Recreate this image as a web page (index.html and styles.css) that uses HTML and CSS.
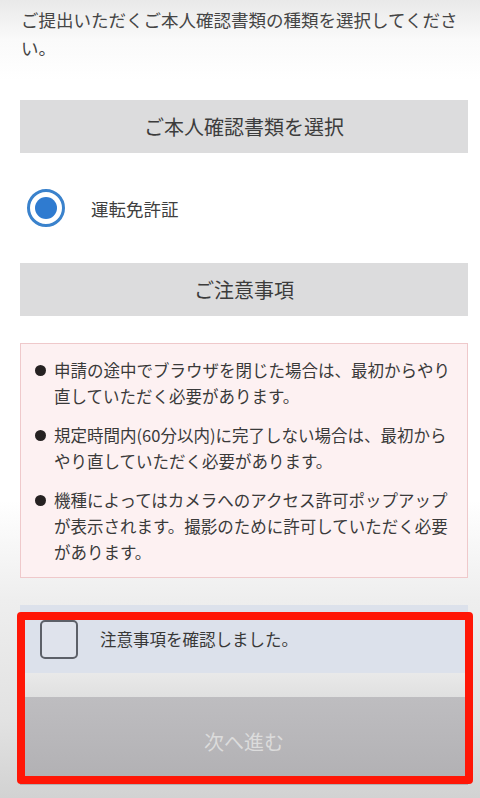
FILE: index.html
```html
<!DOCTYPE html>
<html lang="ja">
<head>
    <meta charset="UTF-8">
    <meta name="viewport" content="width=device-width, initial-scale=1.0">
    <title>ご本人確認書類の選択</title>
    <link rel="stylesheet" href="styles.css">
</head>
<body>
    <div class="page">
        <p class="intro">ご提出いただくご本人確認書類の種類を選択してください。</p>

        <div class="bar">ご本人確認書類を選択</div>

        <label class="radio-row">
            <span class="radio"><span class="radio-dot"></span></span>
            <span class="radio-label">運転免許証</span>
        </label>

        <div class="bar">ご注意事項</div>

        <ul class="notice">
            <li><span class="dot"></span><span>申請の途中でブラウザを閉じた場合は、最初からやり直していただく必要があります。</span></li>
            <li><span class="dot"></span><span>規定時間内(60分以内)に完了しない場合は、最初からやり直していただく必要があります。</span></li>
            <li><span class="dot"></span><span>機種によってはカメラへのアクセス許可ポップアップが表示されます。撮影のために許可していただく必要があります。</span></li>
        </ul>

        <label class="confirm">
            <span class="checkbox"></span>
            <span class="confirm-label">注意事項を確認しました。</span>
        </label>
        <div class="band"></div>
        <button class="next" disabled>次へ進む</button>
    </div>

    <!-- red annotation frame over the bottom area -->
    <div class="highlight"></div>
</body>
</html>
```

FILE: styles.css
```css
body {
    margin: 0;
    padding: 0;
    font-family: "Noto Sans CJK JP", "Noto Sans", sans-serif;
    color: #3c3c3c;
    background: linear-gradient(#e9e9e9 0, #fafafa 40px, #fff 80px, #fff 500px, #eeeeee 600px, #e2e2e2 720px, #d2d2d2 798px);
    min-height: 798px;
    position: relative;
}
.page {
    padding: 6px 12px 0 20px;
}
.intro {
    margin: 0 0 0 1px;
    font-size: 17.5px;
    line-height: 28px;
    color: #454545;
}
.bar {
    margin-top: 36px;
    height: 53px;
    background: #dcdcdd;
    display: flex;
    align-items: center;
    justify-content: center;
    font-size: 20px;
    color: #3c3c3c;
}
.intro + .bar {
    margin-top: 38px;
}
.radio-row {
    margin-top: 36px;
    height: 38px;
    display: flex;
    align-items: center;
    padding-left: 7px;
}
.radio {
    width: 38px;
    height: 38px;
    box-sizing: border-box;
    border: 3.5px solid #3a82cc;
    border-radius: 50%;
    display: flex;
    align-items: center;
    justify-content: center;
    background: #fff;
}
.radio-dot {
    width: 22px;
    height: 22px;
    border-radius: 50%;
    background: #2f7bd0;
}
.radio-label {
    margin-left: 26px;
    font-size: 17.5px;
    color: #404040;
}
.notice {
    list-style: none;
    margin: 27px 0 0;
    padding: 13px 12px 12px 14px;
    background: #fdf1f2;
    border: 1px solid #efc9cb;
}
.notice li {
    display: flex;
    align-items: flex-start;
    font-size: 16.5px;
    line-height: 26px;
    color: #3a3a3a;
}
.notice li + li {
    margin-top: 13px;
}
.dot {
    flex: none;
    width: 11px;
    height: 11px;
    border-radius: 50%;
    background: #262222;
    margin: 7.5px 8px 0 0;
}
.confirm {
    margin-top: 27px;
    height: 68px;
    background: #dce1eb;
    display: flex;
    align-items: center;
    padding-left: 20px;
}
.checkbox {
    width: 38px;
    height: 39px;
    box-sizing: border-box;
    border: 2.5px solid #5c6068;
    border-radius: 5px;
    background: #dfe3ec;
}
.confirm-label {
    margin-left: 22px;
    font-size: 16.5px;
    color: #383838;
}
.band {
    height: 24px;
    background: linear-gradient(#e9e9e9, #e0e0e0);
}
.next {
    display: block;
    width: 100%;
    height: 88px;
    border: none;
    background: linear-gradient(#bebdc0, #b1b0b3);
    color: #dcdcdc;
    font-family: inherit;
    font-size: 20px;
}
.highlight {
    position: absolute;
    left: 17px;
    top: 612px;
    width: 456px;
    height: 172px;
    box-sizing: border-box;
    border: 8px solid #ff1606;
    border-radius: 4px;
}
```
